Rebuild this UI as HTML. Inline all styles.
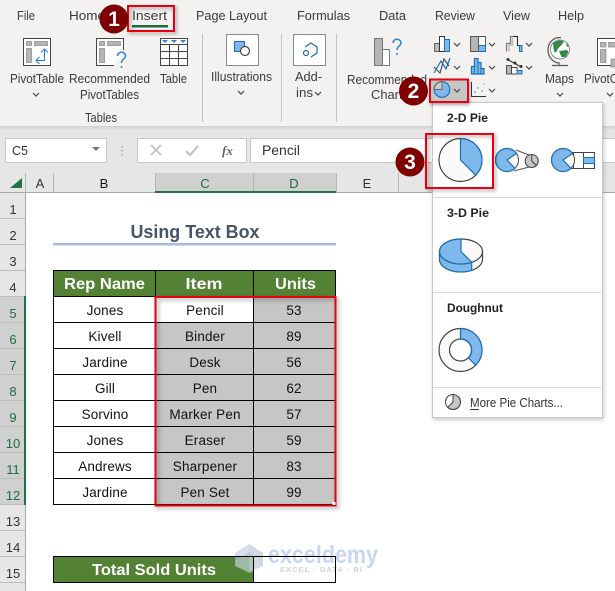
<!DOCTYPE html>
<html><head><meta charset="utf-8">
<style>
html,body{margin:0;padding:0;background:#fff;width:615px;height:591px;overflow:hidden}
svg{display:block;font-family:"Liberation Sans",sans-serif}
.r{font-size:12.5px;fill:#3b3a39}
.c{font-size:13.5px;fill:#111;text-anchor:middle;letter-spacing:.15px}
.h{font-size:15.5px;font-weight:bold;fill:#fff;text-anchor:middle}
.n{font-size:13px;fill:#333;text-anchor:middle}
.ch{fill:none;stroke:#444;stroke-width:1.200}
.b{font-size:12px;font-weight:bold;fill:#222}
.blue{fill:#7fb8ea;stroke:#1a6fb5;stroke-width:1.200}
.bd{font-weight:bold;font-size:21px;fill:#fff;text-anchor:middle}
</style></head><body>
<svg width="615" height="591" viewBox="0 0 615 591" xmlns="http://www.w3.org/2000/svg">
<defs>
<linearGradient id="g" x1="0" y1="0" x2="0" y2="1"><stop offset="0" stop-color="#d0d0d0"/><stop offset="1" stop-color="#e6e6e6"/></linearGradient>
<symbol id="chev" viewBox="0 0 8 5" width="8" height="5" overflow="visible"><path d="M1 1l3 3 3-3" class="ch"/></symbol>
</defs>

<!-- Backgrounds -->
<rect width="615" height="591" fill="#fff"/>
<rect width="615" height="126" fill="#f3f2f1"/>
<rect y="126" width="615" height="47" fill="#e6e6e6"/>
<rect y="126" width="615" height="4" fill="url(#g)"/>

<!-- Tabs -->
<text class="r" x="17" y="20" textLength="18" lengthAdjust="spacingAndGlyphs">File</text>
<text class="r" x="69" y="20" textLength="36" lengthAdjust="spacingAndGlyphs">Home</text>
<text class="r" x="132" y="20" textLength="35" lengthAdjust="spacingAndGlyphs">Insert</text>
<rect x="132" y="25" width="36" height="2.500" fill="#1f6b41"/>
<text class="r" x="196" y="20" textLength="71" lengthAdjust="spacingAndGlyphs">Page Layout</text>
<text class="r" x="297" y="20" textLength="53" lengthAdjust="spacingAndGlyphs">Formulas</text>
<text class="r" x="379" y="20" textLength="27" lengthAdjust="spacingAndGlyphs">Data</text>
<text class="r" x="435" y="20" textLength="40" lengthAdjust="spacingAndGlyphs">Review</text>
<text class="r" x="503" y="20" textLength="27" lengthAdjust="spacingAndGlyphs">View</text>
<text class="r" x="558" y="20" textLength="26" lengthAdjust="spacingAndGlyphs">Help</text>

<!-- Ribbon separators -->
<path d="M202.500 34V122M281.500 34V122M336.500 34V122" stroke="#c4c4c4" fill="none"/>

<!-- PivotTable icon -->
<rect x="23.500" y="38.500" width="27" height="27" fill="#fff" stroke="#444"/>
<rect x="26.500" y="41.500" width="5" height="4" fill="#b5b5b5" stroke="#777" stroke-width=".6"/>
<rect x="34.500" y="41.500" width="13" height="4" fill="#b5b5b5" stroke="#777" stroke-width=".6"/>
<rect x="26.500" y="48.500" width="5" height="14" fill="#b5b5b5" stroke="#777" stroke-width=".6"/>
<path d="M44.500 50V60.500H36M41 52.500L44.500 49L48 52.500M39.500 57L36 60.500L39.500 64" fill="none" stroke="#2f86cf" stroke-width="1.100"/>

<!-- Recommended PivotTables icon -->
<path d="M123.500 50V38.500H96.500V65.500H114" fill="#fff" stroke="#444"/>
<rect x="99.500" y="41.500" width="5" height="4" fill="#b5b5b5" stroke="#777" stroke-width=".6"/>
<rect x="107.500" y="41.500" width="13" height="4" fill="#b5b5b5" stroke="#777" stroke-width=".6"/>
<rect x="99.500" y="48.500" width="5" height="14" fill="#b5b5b5" stroke="#777" stroke-width=".6"/>
<path d="M117.500 56c0-5 8-5 8 0 0 3-4 3-4 7" fill="none" stroke="#2f86cf" stroke-width="1.500"/>
<circle cx="121.500" cy="67" r="1" fill="#2f86cf"/>

<!-- Table icon -->
<rect x="160.500" y="38.500" width="27" height="27" fill="#fff" stroke="#444"/>
<path d="M160 44.500H188M160 51.500H188M160 58.500H188M169.500 44V66M178.500 44V66" stroke="#444" fill="none"/>
<path d="M162 40h6l-3 3zM171 40h6l-3 3zM180 40h6l-3 3z" fill="#2f86cf"/>

<text class="r" x="10" y="83" textLength="54" lengthAdjust="spacingAndGlyphs">PivotTable</text>
<use href="#chev" x="32" y="92"/>
<text class="r" x="69" y="83" textLength="81" lengthAdjust="spacingAndGlyphs">Recommended</text>
<text class="r" x="80" y="99" textLength="59" lengthAdjust="spacingAndGlyphs">PivotTables</text>
<text class="r" x="160" y="83" textLength="27" lengthAdjust="spacingAndGlyphs">Table</text>
<text class="r" x="85" y="122" textLength="32" lengthAdjust="spacingAndGlyphs">Tables</text>

<!-- Illustrations -->
<rect x="226.500" y="34.500" width="32" height="31" fill="#fff" stroke="#888"/>
<rect x="234.500" y="41.500" width="10" height="10" fill="#7fb8ea" stroke="#1a6fb5"/>
<circle cx="245" cy="51" r="4.500" fill="#fff" stroke="#444" stroke-width="1.200"/>
<text class="r" x="211" y="81" textLength="61" lengthAdjust="spacingAndGlyphs">Illustrations</text>
<use href="#chev" x="237" y="90"/>

<!-- Add-ins -->
<rect x="293.500" y="34.500" width="32" height="31" fill="#fff" stroke="#888"/>
<path d="M305 47l6-4 6 4v6l-6 4" fill="none" stroke="#1a6fb5" stroke-width="1.200"/>
<circle cx="306" cy="53" r="2.500" fill="#fff" stroke="#1a6fb5" stroke-width="1.200"/>
<text class="r" x="295" y="81" textLength="27" lengthAdjust="spacingAndGlyphs">Add-</text>
<text class="r" x="296" y="97" textLength="17" lengthAdjust="spacingAndGlyphs">ins</text>
<use href="#chev" x="314" y="91"/>

<!-- Recommended Charts -->
<rect x="374.500" y="38.500" width="8" height="27" fill="#b5b5b5" stroke="#777"/>
<rect x="382.500" y="49.500" width="7" height="16" fill="#fff" stroke="#777"/>
<path d="M393 43c0-5 8-5 8 0 0 3-4 3-4 7" fill="none" stroke="#2f86cf" stroke-width="1.500"/>
<circle cx="397" cy="54" r="1" fill="#2f86cf"/>
<text class="r" x="347" y="84" textLength="80" lengthAdjust="spacingAndGlyphs">Recommended</text>
<text class="r" x="371" y="99" textLength="38" lengthAdjust="spacingAndGlyphs">Charts</text>

<!-- Small chart icons row 1 -->
<rect x="434.500" y="43.500" width="5" height="8" fill="#bbb" stroke="#666"/>
<rect x="439.500" y="36.500" width="5" height="15" fill="#fff" stroke="#333"/>
<rect x="444.500" y="39.500" width="5" height="12" fill="#7fb8ea" stroke="#1a6fb5"/>
<use href="#chev" x="453" y="42"/>
<rect x="470.500" y="36.500" width="15" height="15" fill="#fff" stroke="#555"/>
<rect x="471" y="37" width="7" height="14" fill="#b5b5b5"/>
<rect x="478.500" y="45.500" width="7" height="6" fill="#7fb8ea" stroke="#1a6fb5"/>
<path d="M478.500 37V51" stroke="#555"/>
<use href="#chev" x="488" y="42"/>
<path d="M506.500 51.500V43.500H510.500V36.500H516.500" fill="none" stroke="#777" stroke-width="1.200"/>
<path d="M509 51.500V45H512.500V38" fill="none" stroke="#bbb" stroke-width="1.500"/>
<path d="M513.500 36.500H517.500V45.500H521.500" fill="none" stroke="#222"/>
<rect x="519.500" y="45.500" width="2.500" height="6" fill="#7fb8ea" stroke="#1a6fb5"/>
<use href="#chev" x="525" y="42"/>

<!-- Row 2 -->
<path d="M434 67l6 6 4-14 5 7" fill="none" stroke="#444" stroke-width="1.100"/>
<path d="M434 73l7-12 5 8 4-11" fill="none" stroke="#1a6fb5" stroke-width="1.200"/>
<use href="#chev" x="453" y="65"/>
<path d="M471.500 74V66.500H474.500V58.500H478V62.500H481V68.500H484V74Z" fill="#7fb8ea" stroke="#1a6fb5" stroke-width="1.200"/>
<path d="M474.500 66.500V74M478 62.500V74M481 68.500V74" stroke="#1a6fb5" fill="none"/>
<use href="#chev" x="488" y="65"/>
<path d="M507 59l14 8" stroke="#333" stroke-width="1.100" fill="none"/>
<circle cx="508" cy="59.500" r="1.500" fill="#333"/><circle cx="515" cy="63" r="1.500" fill="#333"/><circle cx="521" cy="66.500" r="1.500" fill="#333"/>
<rect x="506.500" y="65.500" width="5" height="8.500" fill="#b5b5b5" stroke="#555"/>
<rect x="511.500" y="67.500" width="5.500" height="6.500" fill="#fff" stroke="#444"/>
<rect x="517" y="70.500" width="5" height="3.500" fill="#7fb8ea" stroke="#1a6fb5"/>
<use href="#chev" x="525" y="65"/>

<!-- Row 3: scatter -->
<path d="M471.500 82V96.500H486" fill="none" stroke="#333"/>
<g fill="#7fb8ea"><circle cx="475" cy="92" r="1"/><circle cx="478" cy="88" r="1"/><circle cx="482" cy="91" r="1"/><circle cx="484" cy="84" r=".8" fill="#aaa"/></g>
<use href="#chev" x="488" y="88"/>

<!-- Maps -->
<path d="M561 37.500C552 37 548 44 548 50C548 57 553 62 558 63" fill="none" stroke="#555" stroke-width="1.200"/>
<circle cx="560" cy="49.500" r="9.500" fill="#fff" stroke="#777" stroke-width=".8"/>
<path d="M553 43.500c3-3 8-4 11-2l-3 4 -3 3-2 4-2-1zM559 51l8-1 1.500 2-3 5-4 0zM566 43l3 3-2 1z" fill="#2e8b45"/>
<path d="M559 62V66M552 65.500H568" stroke="#555" stroke-width="1.200" fill="none"/>
<text class="r" x="545" y="83" textLength="29" lengthAdjust="spacingAndGlyphs">Maps</text>
<use href="#chev" x="556" y="92"/>

<!-- PivotChart -->
<rect x="597.500" y="38.500" width="26" height="27" fill="#fff" stroke="#444"/>
<rect x="600.500" y="42.500" width="5.500" height="4.500" fill="#b5b5b5" stroke="#777" stroke-width=".6"/>
<rect x="608.500" y="42.500" width="8" height="4.500" fill="#b5b5b5" stroke="#777" stroke-width=".6"/>
<rect x="600.500" y="49.500" width="5.500" height="13" fill="#b5b5b5" stroke="#777" stroke-width=".6"/>
<rect x="611" y="59" width="6" height="8" fill="#b5b5b5" stroke="#777" stroke-width=".6"/>
<text class="r" x="584" y="83" textLength="54" lengthAdjust="spacingAndGlyphs">PivotChart</text>
<use href="#chev" x="606" y="92"/>

<!-- Formula bar -->
<rect x="5.500" y="138.500" width="101" height="24" fill="#fff" stroke="#c8c8c8"/>
<text x="12" y="155" font-size="12.500" fill="#333">C5</text>
<path d="M92 147h8l-4 4z" fill="#777"/>
<path d="M122 146v1.500M122 150v1.500M122 154v1.500" stroke="#aaa" stroke-width="1.500" fill="none"/>
<rect x="137.500" y="138.500" width="109" height="24" fill="#fff" stroke="#c8c8c8"/>
<path d="M151 145l10 10M161 145l-10 10" stroke="#c2c2c2" stroke-width="1.800" fill="none"/>
<path d="M186 151l4 4 8-9" stroke="#c2c2c2" stroke-width="2.200" fill="none"/>
<text x="222" y="155" font-family="Liberation Serif" font-style="italic" font-weight="bold" font-size="13" fill="#666">fx</text>
<rect x="250.500" y="138.500" width="370" height="24" fill="#fff" stroke="#c8c8c8"/>
<text x="262" y="155" font-size="13.500" fill="#333" textLength="38" lengthAdjust="spacingAndGlyphs">Pencil</text>

<!-- Column headers -->
<rect y="173" width="615" height="20" fill="#e6e6e6"/>
<rect x="155" y="173" width="181" height="18" fill="#d0d0d0"/>
<path d="M22 178v10H10z" fill="#217346"/>
<path d="M25.500 173V193M53.500 173V192M155.500 173V192M253.500 173V192M336.500 173V192M398.500 173V192" stroke="#b5b5b5" fill="none"/>
<rect y="192" width="615" height="1" fill="#a8a8a8"/>
<rect x="155" y="191" width="181" height="2" fill="#217346"/>
<text class="n" x="40" y="188">A</text>
<text class="n" x="104" y="188" style="fill:#111">B</text>
<text class="n" x="205" y="188" style="fill:#1f6b41">C</text>
<text class="n" x="294" y="188" style="fill:#1f6b41">D</text>
<text class="n" x="367" y="188">E</text>

<!-- Row headers -->
<rect y="193" width="25" height="398" fill="#e6e6e6"/>
<rect y="296" width="25" height="208" fill="#d0d0d0"/>
<rect x="25" y="193" width="1" height="398" fill="#a8a8a8"/>
<path d="M0 218.500H25M0 244.500H25M0 270.500H25M0 296.500H25M0 322.500H25M0 348.500H25M0 374.500H25M0 400.500H25M0 426.500H25M0 452.500H25M0 478.500H25M0 504.500H25M0 530.500H25M0 556.500H25M0 582.500H25" stroke="#bdbdbd" fill="none"/>
<rect x="24" y="296" width="2" height="209" fill="#217346"/>
<text class="n" x="13" y="214">1</text>
<text class="n" x="13" y="240">2</text>
<text class="n" x="13" y="266">3</text>
<text class="n" x="13" y="292">4</text>
<text class="n" x="13" y="318" style="fill:#1f6b41">5</text>
<text class="n" x="13" y="344" style="fill:#1f6b41">6</text>
<text class="n" x="13" y="370" style="fill:#1f6b41">7</text>
<text class="n" x="13" y="396" style="fill:#1f6b41">8</text>
<text class="n" x="13" y="422" style="fill:#1f6b41">9</text>
<text class="n" x="13" y="448" style="fill:#1f6b41">10</text>
<text class="n" x="13" y="474" style="fill:#1f6b41">11</text>
<text class="n" x="13" y="500" style="fill:#1f6b41">12</text>
<text class="n" x="13" y="526">13</text>
<text class="n" x="13" y="552">14</text>
<text class="n" x="13" y="578">15</text>

<!-- Title -->
<text x="195" y="238" text-anchor="middle" font-size="18" font-weight="bold" fill="#44546a" textLength="129" lengthAdjust="spacingAndGlyphs">Using Text Box</text>
<rect x="53" y="243" width="283" height="2.500" fill="#a9bbdf"/>

<!-- Table -->
<rect x="53" y="270" width="283" height="26" fill="#548235"/>
<rect x="155" y="296" width="181" height="208" fill="#c6c6c6"/>
<rect x="156" y="297" width="97" height="25" fill="#fff"/>
<path d="M53.500 270.500H335.500V504.500H53.500ZM53 296.500H336M53 322.500H336M53 348.500H336M53 374.500H336M53 400.500H336M53 426.500H336M53 452.500H336M53 478.500H336M155.500 270V505M253.500 270V505" fill="none" stroke="#000" stroke-width="1"/>
<text class="h" x="104.500" y="289" textLength="81" lengthAdjust="spacingAndGlyphs">Rep Name</text>
<text class="h" x="204" y="289" textLength="37" lengthAdjust="spacingAndGlyphs">Item</text>
<text class="h" x="295.500" y="289" textLength="41" lengthAdjust="spacingAndGlyphs">Units</text>

<text class="c" x="105" y="315">Jones</text><text class="c" x="205" y="315">Pencil</text><text class="c" x="294" y="315">53</text>
<text class="c" x="105" y="341">Kivell</text><text class="c" x="205" y="341">Binder</text><text class="c" x="294" y="341">89</text>
<text class="c" x="105" y="367">Jardine</text><text class="c" x="205" y="367">Desk</text><text class="c" x="294" y="367">56</text>
<text class="c" x="105" y="393">Gill</text><text class="c" x="205" y="393">Pen</text><text class="c" x="294" y="393">62</text>
<text class="c" x="105" y="419">Sorvino</text><text class="c" x="205" y="419">Marker Pen</text><text class="c" x="294" y="419">57</text>
<text class="c" x="105" y="445">Jones</text><text class="c" x="205" y="445">Eraser</text><text class="c" x="294" y="445">59</text>
<text class="c" x="105" y="471">Andrews</text><text class="c" x="205" y="471">Sharpener</text><text class="c" x="294" y="471">83</text>
<text class="c" x="105" y="497">Jardine</text><text class="c" x="205" y="497">Pen Set</text><text class="c" x="294" y="497">99</text>

<!-- Total fill -->
<rect x="53.500" y="556.500" width="200" height="26" fill="#548235"/>
<text class="h" x="154" y="575" textLength="124" lengthAdjust="spacingAndGlyphs">Total Sold Units</text>

<!-- Watermark -->
<path d="M235 553L249 544L263 553V566L249 572L235 566Z" fill="#b9c9e2" fill-opacity=".6"/>
<path d="M249 544L263 553V566L249 572Z" fill="#d0d4da" fill-opacity=".65"/>
<path d="M235 561L249 552L254 556V572L249 573L235 566Z" fill="#a9c2b0" fill-opacity=".55"/>
<text x="268" y="563" font-size="25" font-weight="bold" fill="#c9d6f2" textLength="110" lengthAdjust="spacingAndGlyphs">exceldemy</text>
<text x="280" y="572" font-size="7.500" font-weight="bold" fill="#d2d2d2" textLength="82">EXCEL - DATA - BI</text>

<!-- Total borders -->
<rect x="53.500" y="556.500" width="200" height="26" fill="none" stroke="#000"/>
<rect x="253.500" y="556.500" width="82" height="26" fill="none" stroke="#000"/>

<!-- Red selection -->
<rect x="155.500" y="297" width="180" height="208.500" fill="none" stroke="#e8000f" stroke-width="2" style="filter:drop-shadow(2px 2px 2px rgba(0,0,0,.4))"/>
<rect x="332.500" y="502" width="3" height="3" fill="#fff"/>

<!-- Dropdown -->
<rect x="432.500" y="102.500" width="170" height="315" fill="#fff" stroke="#c8c8c8" style="filter:drop-shadow(1px 2px 2px rgba(0,0,0,.2))"/>
<text class="b" x="447" y="122" textLength="41" lengthAdjust="spacingAndGlyphs">2-D Pie</text>
<text class="b" x="447" y="217" textLength="42" lengthAdjust="spacingAndGlyphs">3-D Pie</text>
<text class="b" x="447" y="312" textLength="56" lengthAdjust="spacingAndGlyphs">Doughnut</text>
<path d="M433 197.500H601M433 292.500H601M433 387.500H601" stroke="#d8d8d8" fill="none"/>

<!-- 2D pie -->
<circle cx="460.500" cy="160" r="21.500" fill="#fafafa" stroke="#444" stroke-width="1.200"/>
<path d="M460.500 160V138.500A21.500 21.500 0 0 1 475.700 175.200Z" class="blue"/>
<!-- Pie of pie -->
<path d="M516 150L529 155M514 171L529 167" stroke="#555" fill="none"/>
<circle cx="531.700" cy="161" r="6.500" fill="#c6c6c6" stroke="#444" stroke-width="1.100"/>
<path d="M531.700 154.500V161L536.500 165.500" fill="none" stroke="#444" stroke-width="1"/>
<circle cx="507" cy="160" r="11.500" fill="#fff" stroke="#444"/>
<path d="M516.500 153.500A11.500 11.500 0 1 0 515 168.300L507 160Z" class="blue"/>
<!-- Bar of pie -->
<path d="M566 152.500H573.500M566 168.500H573.500" stroke="#444" fill="none"/>
<rect x="573.500" y="152.500" width="21" height="16" fill="#fff" stroke="#444"/>
<path d="M583.500 152V169" stroke="#444"/>
<rect x="583.500" y="157.500" width="11" height="6" fill="#7fb8ea" stroke="#1a6fb5"/>
<circle cx="563" cy="160" r="11.500" fill="#fff" stroke="#444"/>
<path d="M572.500 153.500A11.500 11.500 0 1 0 571 168.300L563 160Z" class="blue"/>

<!-- 3D pie -->
<path d="M439.500 251.500V259.500A21.500 12.500 0 0 0 482.500 259.500V251.500Z" fill="#fafafa" stroke="#444" stroke-width="1.200"/>
<path d="M439.500 251.500V259.500A21.500 12.500 0 0 0 471.700 270.300V262.300A21.500 12.500 0 0 1 439.500 251.500Z" class="blue"/>
<ellipse cx="461" cy="251.500" rx="21.500" ry="12.500" fill="#fafafa" stroke="#444" stroke-width="1.200"/>
<path d="M461 251.500V239A21.500 12.500 0 0 0 439.500 251.500A21.500 12.500 0 0 0 471.700 262.300Z" class="blue"/>

<!-- Doughnut -->
<circle cx="460.500" cy="350" r="21.500" fill="#fafafa" stroke="#444" stroke-width="1.200"/>
<path d="M460.500 328.500A21.500 21.500 0 0 1 475.700 365.200L468.300 357.800A11 11 0 0 0 460.500 339Z" class="blue"/>
<circle cx="460.500" cy="350" r="11" fill="#fff" stroke="#444" stroke-width="1.200"/>
<path d="M460.500 339A11 11 0 0 1 468.300 357.800" fill="none" stroke="#1a6fb5" stroke-width="1.200"/>

<!-- More pie charts -->
<circle cx="453" cy="402" r="7.500" fill="#c6c6c6" stroke="#444" stroke-width="1.100"/>
<path d="M453 402V394.500A7.500 7.500 0 0 0 447.700 407.300Z" fill="#fff" stroke="#444" stroke-width="1"/>
<text x="470" y="407" font-size="12.500" fill="#333" textLength="93" lengthAdjust="spacingAndGlyphs">More Pie Charts...</text>
<rect x="470" y="409" width="9" height="1" fill="#333"/>

<!-- Insert highlight -->
<rect x="128" y="6" width="46" height="25" fill="none" stroke="#e8000f" stroke-width="2" style="filter:drop-shadow(2px 2px 1.500px rgba(0,0,0,.35))"/>
<circle cx="114" cy="19" r="14.500" fill="#7f0000"/>
<text class="bd" x="114" y="26">1</text>

<!-- Pie button -->
<rect x="430" y="79.500" width="38" height="22.500" fill="#c6c6c6" stroke="#e8000f" stroke-width="2" style="filter:drop-shadow(1px 2px 1.500px rgba(0,0,0,.35))"/>
<circle cx="442" cy="89.500" r="7.800" fill="#7fb8ea" stroke="#1a6fb5" stroke-width="1.200"/>
<path d="M442 89.500V81.700A7.800 7.800 0 0 0 434.200 89.500Z" fill="#ccc" stroke="#666" stroke-width="1"/>
<use href="#chev" x="453" y="88"/>
<circle cx="413.500" cy="91" r="14.500" fill="#7f0000"/>
<text class="bd" x="413.500" y="98">2</text>

<!-- Red around pie -->
<rect x="426" y="134" width="67" height="54" fill="none" stroke="#e8000f" stroke-width="2" style="filter:drop-shadow(2px 2px 1.500px rgba(0,0,0,.35))"/>
<circle cx="410" cy="162" r="14.500" fill="#7f0000"/>
<text class="bd" x="410" y="169">3</text>
</svg>
</body></html>
